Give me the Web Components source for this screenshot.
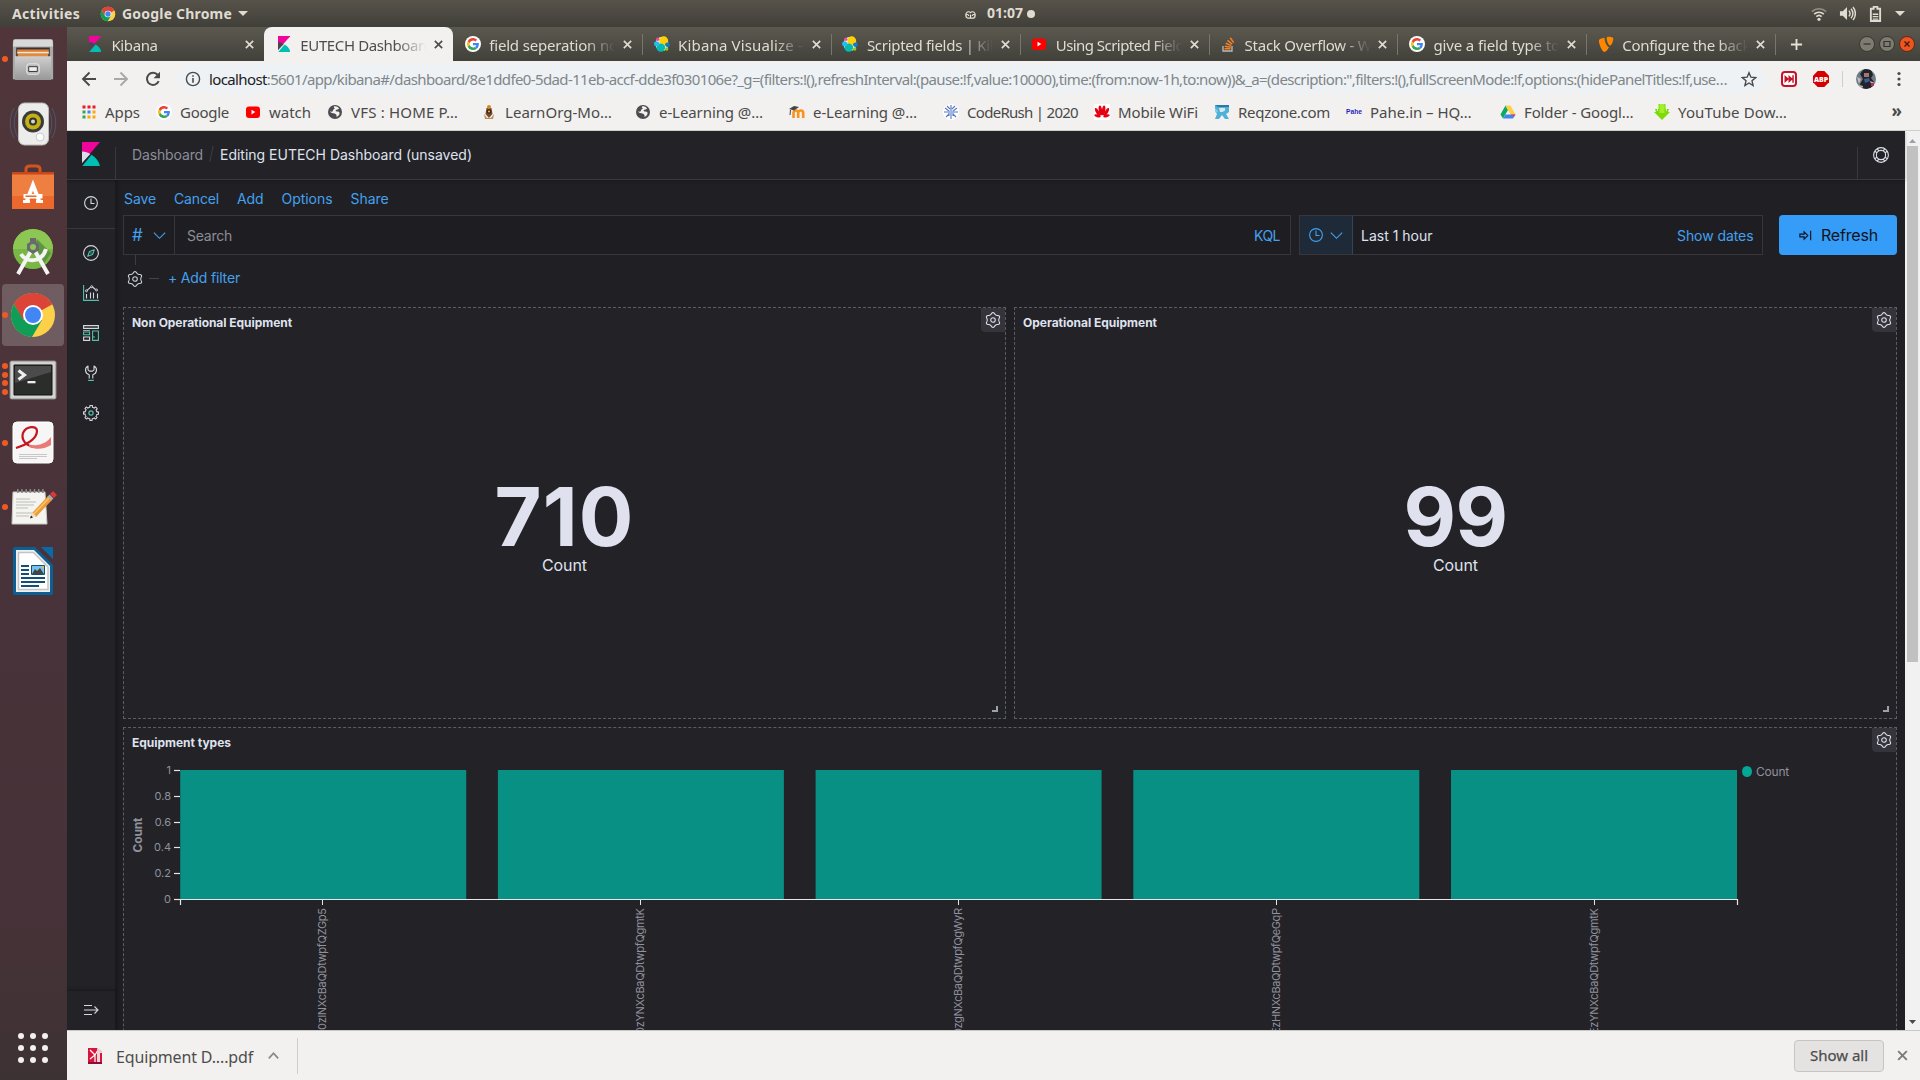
<!DOCTYPE html>
<html lang="en">
<head>
<meta charset="utf-8">
<title>EUTECH Dashboard - Kibana</title>
<style>
html,body{margin:0;padding:0;width:1920px;height:1080px;overflow:hidden;background:#202024}
</style>
</head>
<body>
<desktop-shell></desktop-shell>
<script>
const polar=(n,f)=>{let d='';for(let i=0;i<n;i++){const t=i/n*Math.PI*2,r=f(t);d+=(i?'L':'M')+(8+r*Math.sin(t)).toFixed(2)+' '+(8-r*Math.cos(t)).toFixed(2);}return d+'Z';};
const lobes=polar(96,t=>6.5+.85*Math.cos(6*t)+.12*Math.cos(12*t));
const teeth=polar(128,t=>Math.cos(8*t)>0?7.5:5.9);
const G='<path fill="#ea4335" d="M8 3.6c1.2 0 2.2.4 3 1.2l2.2-2.2A7.5 7.5 0 0 0 1.3 4.7l2.6 2A4.4 4.4 0 0 1 8 3.6z"/><path fill="#fbbc05" d="M3.6 8c0-.5.1-.9.3-1.3l-2.6-2a7.5 7.5 0 0 0 0 6.6l2.6-2A4.300 4.300 0 0 1 3.600 8z"/><path fill="#34a853" d="M8 12.400A4.400 4.400 0 0 1 3.900 9.300l-2.600 2A7.500 7.500 0 0 0 13 13.700l-2.500-2c-.700.500-1.500.700-2.500.700z"/><path fill="#4285f4" d="M15.300 6.600H8v3h4.200c-.200.900-.700 1.600-1.700 2.100l2.500 2c1.600-1.500 2.700-4 2.300-7.100z"/>';
const chromeMark='<circle cx="24" cy="24" r="22" fill="#fdd04a"/><path fill="#db4437" d="M24 24 4.950 13A22 22 0 0 1 43 13.500z"/><path fill="#db4437" d="M5 13A22 22 0 0 1 43.050 13H24L14 29.500z"/><path fill="#0f9d58" d="M4.950 13A22 22 0 0 0 23 46l10-17-9-5-9.500 5z"/><circle cx="24" cy="24" r="10" fill="#fff"/><circle cx="24" cy="24" r="8" fill="#4285f4"/>';
const globe='<circle cx="8" cy="8" r="7" fill="#4c4c50"/><path fill="#f2f1ef" d="M7 2.500c2-.500 4 .500 5 2-1 1.500-3 .500-3.500 2.500 1.500 1 3 0 4 1.500.500 2-1.500 4-3 4.500.500-2-.500-3-2-3.500C6 9 4 9 3 7.500c1 0 2 .500 3-.500-.500-1.500 1-2 2-2.500C7.500 4 6.500 4 7 2.500z"/>';
const elastic='<ellipse cx="9.700" cy="5" rx="4.500" ry="4.700" fill="#fed10a"/><ellipse cx="6.800" cy="11.600" rx="4.400" ry="4.200" fill="#02bcb1"/><ellipse cx="2.700" cy="7.700" rx="2.700" ry="2.500" fill="#24bbef"/><circle cx="3.800" cy="3.200" r="1.700" fill="#f04e98"/><ellipse cx="13.500" cy="8.800" rx="2.500" ry="2.300" fill="#1678c2"/><circle cx="12.700" cy="13" r="1.700" fill="#93c90e"/>';
const yt='<rect x="1" y="2.500" width="14" height="11.500" rx="3" fill="#f00"/><path fill="#fff" d="M6.500 5.800v4.600l3.800-2.300z"/>';
const ICONS={
 chrome:['0 0 48 48',chromeMark],
 google:['0 0 16 16','<circle cx="8" cy="8" r="8" fill="#fff"/><g transform="translate(1.600 1.600) scale(.8)">'+G+'</g>'],
 kibana:['0 0 18 24','<path fill="#f0059a" d="M0 0h18L0 21z"/><path fill="var(--kmid,#dcdce8)" d="M0 9.500c3.200 0 6 1 8.300 2.500L0 21z"/><path fill="#00bfb3" d="M9.500 12.800C14 15.500 17 19.500 18 24H.300z"/>'],
 elastic:['0 0 16 16','<ellipse cx="8" cy="8" rx="6.500" ry="7" fill="#fff"/>'+elastic],
 youtube:['0 0 16 16',yt],
 stack:['0 0 16 16','<path fill="none" stroke="#bcbbbb" stroke-width="1.300" d="M3 10v5h9v-5"/><path stroke="#f48024" stroke-width="1.500" d="M4.500 12.800h6M4.800 10.300l5.900 1M5.700 7.300l5.500 2.300M7.500 4.300l4.600 3.800M10.200 1.800l3.500 4.800"/>'],
 typo3:['0 0 16 16','<path fill="#ff8700" d="M11.300 10.800c-.200 0-.400.100-.600.100-1.700 0-4.200-6-4.200-8 0-.700.200-1 .400-1.200C4.500 2 2 2.700 1.200 3.700 1 4 .900 4.400.900 5c0 3.100 3.300 11 5.600 11 1.100 0 2.900-1.800 4.800-5.200zM10.100.800c2.500 0 5.200.4 5.200 1.800 0 2.900-1.800 7-3 7-1.600 0-3.600-4.500-3.600-6.900 0-1.300.400-1.900 1.400-1.900z"/>'],
 close:['0 0 12 12','<path stroke="currentColor" stroke-width="1.800" d="M2 2l8 8M10 2l-8 8"/>'],
 plus:['0 0 14 14','<path stroke="currentColor" stroke-width="2" d="M7 1v12M1 7h12"/>'],
 back:['0 0 16 16','<path fill="none" stroke="currentColor" stroke-width="1.900" d="M15 8H2M8.500 1.500 2 8l6.500 6.500"/>'],
 fwd:['0 0 16 16','<path fill="none" stroke="currentColor" stroke-width="1.900" d="M1 8h13M7.500 1.500 14 8l-6.500 6.500"/>'],
 reload:['0 0 16 16','<path fill="none" stroke="currentColor" stroke-width="2" d="M13.700 10.200A6.100 6.100 0 1 1 12.800 4"/><path fill="currentColor" d="M15 .700v6.500H8.500z"/>'],
 info:['0 0 16 16','<circle cx="8" cy="8" r="6.600" fill="none" stroke="currentColor" stroke-width="1.400"/><path fill="currentColor" d="M7.200 7h1.600v4.800H7.200zM7.200 4.200h1.600v1.600H7.200z"/>'],
 star:['0 0 16 16','<path fill="none" stroke="currentColor" stroke-width="1.400" d="M8 1.700l1.900 4.500 4.800.400-3.700 3.200 1.100 4.700L8 12l-4.100 2.500L5 9.800 1.300 6.600l4.800-.400z"/>'],
 ext:['0 0 16 16','<rect x="1" y="1" width="14" height="14" rx="3" fill="#fff" stroke="#c5132c" stroke-width="2"/><path fill="#c5132c" d="M3.500 4 8 8l-4.500 4zM7.500 4 12 8l-4.500 4zM11.300 4.300h1.500v7.400h-1.500z"/>'],
 abp:['0 0 16 16','<path fill="#d40000" d="M4.700 0h6.600L16 4.700v6.600L11.300 16H4.700L0 11.300V4.700z"/><text x="8" y="10.600" text-anchor="middle" font-family="Open Sans, sans-serif" font-weight="800" font-size="7" fill="#fff">ABP</text>'],
 avatar:['0 0 20 20','<defs><clipPath id="c"><circle cx="10" cy="10" r="10"/></clipPath></defs><g clip-path="url(#c)"><path fill="#6d7b86" d="M0 0h20v20H0z"/><path fill="#23242b" d="M4 5l4-5h7l2 6-2 3 3 4v8H5l-1-6 3-5z"/><path fill="#a5766a" d="M8 4h5v4H8z"/><path fill="#3a5f96" d="M8 10l5-1 1 3-5 2z"/><path fill="#c9bcc0" d="M1 8l4 2-2 5zM14 12l5 2-3 3zM3 16l4 1-1 3z"/><path fill="#b0305b" d="M15 14h3v3h-3z"/></g>'],
 dots:['0 0 16 16','<g fill="currentColor"><circle cx="8" cy="2.500" r="1.600"/><circle cx="8" cy="8" r="1.600"/><circle cx="8" cy="13.500" r="1.600"/></g>'],
 apps:['0 0 16 16','<path fill="#ea1b22" d="M1.500 1.500h3v3h-3zM6.500 1.500h3v3h-3zM11.500 1.500h3v3h-3z"/><path fill="#34a853" d="M1.500 6.500h3v3h-3zM1.500 11.500h3v3h-3z"/><path fill="#4285f4" d="M6.500 6.500h3v3h-3z"/><path fill="#fbaa05" d="M11.500 6.500h3v3h-3zM6.500 11.500h3v3h-3zM11.500 11.500h3v3h-3z"/>'],
 globe:['0 0 16 16',globe],
 learn:['0 0 16 16','<path fill="#7a4a2a" d="M5.500 4h5l1 6-3.500 4-3.500-4z"/><circle cx="8" cy="3" r="2" fill="#d08a2a"/><circle cx="8" cy="7.500" r="2.300" fill="#3a2222"/><circle cx="8" cy="7.500" r="1.100" fill="#d9b44a"/><path fill="#b98b55" d="M3 10l3 4h4l3-4-1 5H4z"/>'],
 moodle:['0 0 16 16','<path fill="none" stroke="#f7931e" stroke-width="2.600" d="M4.500 14V9c0-3.300 4.700-3.300 4.700 0v5M9.200 9c0-3.300 5-3.300 5 0v5"/><path fill="#444" d="M0 5l5-3 5 1-5 3.500zM1 6l-.500 5h1L2 6z"/>'],
 coderush:['0 0 16 16','<circle cx="8" cy="8" r="8" fill="#fff"/><path fill="none" stroke="#5577c4" stroke-width="1.100" d="M8 1v14M2 4l4 3v5M1 8h4M14 4l-4 3v5M15 8h-4M4 2l3 3M12 2L9 5M3 13l3-3M13 13l-3-3"/>'],
 huawei:['0 0 16 16','<path fill="#fff" d="M0 0h16v16H0z"/><g fill="#e60012"><ellipse cx="6.500" cy="6.500" rx="1.700" ry="5" transform="rotate(-8 6.500 7)"/><ellipse cx="9.500" cy="6.500" rx="1.700" ry="5" transform="rotate(8 9.500 7)"/><ellipse cx="3.500" cy="8" rx="1.600" ry="4.500" transform="rotate(-28 3.500 8)"/><ellipse cx="12.500" cy="8" rx="1.600" ry="4.500" transform="rotate(28 12.500 8)"/><ellipse cx="3.500" cy="11.800" rx="3.300" ry="1.400" transform="rotate(12 3.500 11.800)"/><ellipse cx="12.500" cy="11.800" rx="3.300" ry="1.400" transform="rotate(-12 12.500 11.800)"/></g>'],
 reqzone:['0 0 16 16','<path fill="#4fb0d8" d="M1 1h14v7l-3 2 3 5h-4l-3-4-3 4H1l2-5-2-3z"/><path fill="#d6e8f0" d="M5 4h6v2.500L8.500 8H6z"/><path fill="#2e7aa5" d="M1 1h14v2H4z"/><path fill="#8ccbe6" d="M1 4l3 3-2 2-1-2z"/>'],
 pahe:['0 0 16 16','<text x="0" y="10" textLength="16" lengthAdjust="spacingAndGlyphs" font-family="Liberation Sans, sans-serif" font-weight="700" font-size="8" fill="#2a1fc0">Pahe</text>'],
 drive:['0 0 16 16','<path fill="#0da960" d="M5.500 1.500 .500 10.500l2.500 4L8 6z"/><path fill="#ffcf48" d="M5.500 1.500h5l5 9h-5z"/><path fill="#4285f4" d="M3 14.500l2.600-4h9.900l-2.500 4z"/><path fill="#ea4335" d="M10.500 10.500h5l-1.300 2z"/>'],
 ytd:['0 0 16 16','<path fill="#7ddb08" d="M4.500 0h7v5H15l-1 3h2l-8 8-8-8h2L1 5h3.500z"/><path stroke="#f2f1ef" stroke-width=".8" d="M3.500 1v6M12.500 1v6"/><path fill="#a4ef2b" d="M5.500 0h5v9h-5z"/>'],
 cog:['0 0 16 16','<path fill="none" stroke="currentColor" stroke-width="1.050" d="'+lobes+'"/><circle cx="8" cy="8" r="2.300" fill="none" stroke="currentColor" stroke-width="1.050"/>'],
 mgmt:['0 0 16 16','<path fill="none" stroke="currentColor" stroke-width="1.100" stroke-linejoin="round" d="'+teeth+'"/><circle cx="8" cy="8" r="2.100" fill="none" stroke="#4fc3ad" stroke-width="1.200"/>'],
 clock:['0 0 16 16','<circle cx="8" cy="8" r="6.400" fill="none" stroke="currentColor" stroke-width="1.100"/><path fill="none" stroke="currentColor" stroke-width="1.100" d="M8 3.500v5h3.500"/>'],
 compass:['0 0 16 16','<circle cx="8" cy="8" r="7.400" fill="none" stroke="currentColor" stroke-width="1.100"/><path fill="none" stroke="#4fc3ad" stroke-width="1.100" stroke-linejoin="round" d="M11.300 4.700 9.500 9.500 4.700 11.300 6.500 6.500z"/><circle cx="8" cy="8" r=".700" fill="#4fc3ad"/>'],
 viz:['0 0 16 16','<path fill="none" stroke="#4fc3ad" stroke-width="1.100" d="M.600 0v15.400H16"/><path fill="none" stroke="currentColor" stroke-width="1.100" d="M3.500 9v4.500M7.500 7.500v6M10.500 7.500v6M14.500 8.500v5M4.200 5.200l3.600-3M9.500 2l3 2.500"/><g fill="none" stroke="currentColor"><circle cx="3.500" cy="5.800" r="1"/><circle cx="8.700" cy="1.700" r="1"/><circle cx="13.500" cy="5" r="1"/></g>'],
 dash:['0 0 16 16','<path fill="none" stroke="currentColor" stroke-width="1.100" d="M.600.600h14.800v2.800H.600zM.600 12h6v3.400h-6z"/><path stroke="currentColor" opacity=".7" d="M0 5.500h7"/><path fill="none" stroke="#4fc3ad" stroke-width="1.100" d="M.600 7h6v2.800h-6zM9.600 6h5.800v9.400H9.600zM9.600 12H12"/>'],
 wrench:['0 0 16 16','<path fill="none" stroke="currentColor" stroke-width="1.100" stroke-linejoin="round" d="M6.200 13.500V9.700C1.800 8.500 1.200 3 5 1v3.800l1.500 1.300h3L11 4.800V1c3.800 2 3.200 7.500-1.200 8.700v3.800"/><path stroke="#4fc3ad" stroke-width="1.200" d="M5.200 15.400h5.600"/>'],
 collapse:['0 0 16 16','<path fill="none" stroke="currentColor" stroke-width="1.100" d="M1 3.500h8M1 8h13M1 12.500h8M11.500 4.500 15 8l-3.500 3.500"/>'],
 help:['0 0 16 16','<g fill="none" stroke="currentColor" stroke-width="1.100"><circle cx="8" cy="8" r="7.400"/><circle cx="8" cy="8" r="4.600"/><path d="M4.300 1.600l1.500 2.500M11.700 1.600l-1.500 2.500M4.300 14.400l1.500-2.500M11.700 14.400l-1.500-2.500M1.600 4.300l2.500 1.500M1.600 11.700l2.500-1.500M14.400 4.300l-2.500 1.500M14.400 11.700l-2.500-1.500"/></g>'],
 down:['0 0 16 16','<path fill="none" stroke="currentColor" stroke-width="1.200" d="M2 5l6 6 6-6"/>'],
 up:['0 0 16 16','<path fill="none" stroke="currentColor" stroke-width="1.800" d="M3 11l5-5.500 5 5.500"/>'],
 kquery:['0 0 16 16','<path fill="none" stroke="currentColor" stroke-width="1.200" d="M2 6.500h4.500V4L10.500 8l-4 4V9.500H2zM13.500 3v10"/>'],
 wifi:['0 0 18 18','<g fill="none" stroke="#dfdbd2" stroke-width="1.800"><path opacity=".45" d="M1 6.300c4.500-4.200 11.500-4.200 16 0"/><path d="M3.600 9.200c3-2.800 7.800-2.800 10.800 0M6 12c1.700-1.600 4.300-1.600 6 0"/></g><circle cx="9" cy="15" r="1.800" fill="#dfdbd2"/>'],
 volume:['0 0 18 18','<path fill="#dfdbd2" d="M1 6.500h3L8.500 2v14L4 11.500H1z"/><path fill="none" stroke="#dfdbd2" stroke-width="1.500" d="M10.500 6c1.500 1.800 1.500 4.200 0 6M12.700 4c2.500 3 2.500 7 0 10M14.800 2.200c3.400 4 3.400 9.600 0 13.600"/>'],
 battery:['0 0 14 18','<path fill="none" stroke="#dfdbd2" stroke-width="2" d="M2 4h3V2h4v2h3v13H2z"/><path fill="#dfdbd2" d="M4 9h6v1.500H4zM4 11.600h6v1.500H4zM4 14.200h6v1.300H4z"/>'],
 tri:['0 0 10 6','<path fill="currentColor" d="M0 0h10L5 6z"/>'],
 triup:['0 0 10 6','<path fill="currentColor" d="M0 6h10L5 0z"/>'],
 layout:['0 0 12 12','<g fill="none" stroke="#e6e2d9" stroke-width="1.300"><path d="M4 7.500a1.500 1.500 0 1 0-1.500 1.500M2.500 9.500C.5 9.500.3 5 2 3.700c1-1 2.800-.9 4 .3 1.200-1.200 3-1.300 4-.3 1.700 1.300 1.500 5.800-.5 6.300M2.500 10h7M6 6v3.500M8 7.500a1.500 1.500 0 1 1 1.500 1.500"/></g>'],
 pdf:['0 0 16 16','<path fill="#d6143c" d="M1 0h9l5 4v12H1z"/><path fill="#8d0c3a" d="M1 14h14v2H1z"/><path fill="none" stroke="#fff" stroke-width="1.200" d="M3 2l5 5-5 4M8 7v7M8 7l3-5"/><path fill="#e9d4d6" d="M10 0l5 4v1h-2v9h-3z"/>'],
 wmin:['0 0 16 16','<circle cx="8" cy="8" r="7.500" fill="#7d7b72" stroke="#383730"/><path stroke="#33322d" stroke-width="1.200" d="M4.500 8h7"/>'],
 wmax:['0 0 16 16','<circle cx="8" cy="8" r="7.500" fill="#7d7b72" stroke="#383730"/><path fill="none" stroke="#33322d" stroke-width="1.200" d="M5 5.500h6v5H5z"/>'],
 wclose:['0 0 16 16','<circle cx="8" cy="8" r="7.500" fill="#ee5420" stroke="#5a2a18"/><path stroke="#461c0c" stroke-width="1.400" d="M5.500 5.500l5 5M10.500 5.500l-5 5"/>'],
 files:['0 0 48 48','<defs><linearGradient id="g" x2="0" y2="1"><stop stop-color="#cfcfcf"/><stop offset="1" stop-color="#989898"/></linearGradient></defs><path fill="#a9a9a9" d="M3 6c0-2 1-3 3-3h36c2 0 3 1 3 3v39H3z"/><path fill="#d8d8d8" d="M4 4h40l1 7H3z"/><path fill="#333" d="M6.500 12h35v10h-35z"/><path fill="#e07b32" d="M7.500 14h33v3h-33z"/><path fill="#fbe5c8" d="M7.500 16.500h33v2h-33z"/><path fill="#e48b3b" d="M8 18.500h32V22H8z"/><path fill="url(#g)" d="M5 21h38v25H5z"/><rect x="17.500" y="29" width="13" height="11" rx="2.500" fill="#bbb" stroke="#e8e8e8"/><path fill="#eee" stroke="#333" d="M19.500 32h9v5h-9z"/>'],
 speaker:['0 0 48 48','<g fill="none" stroke="#4c6482" opacity=".7"><path d="M9 10c-5 8-5 20 0 28M5 9c-5 9-5 21 0 30M39 10c5 8 5 20 0 28M43 9c5 9 5 21 0 30"/></g><rect x="9.500" y="4" width="30" height="42" rx="6" fill="#ececea" stroke="#bbb"/><circle cx="24" cy="22.500" r="11" fill="#3b3b3b"/><circle cx="24" cy="22.500" r="8" fill="#c5b014"/><circle cx="24" cy="22.500" r="4" fill="#333"/><circle cx="24" cy="22.500" r="2" fill="#d8d8c8"/><circle cx="31" cy="38" r="4" fill="#fafafa" stroke="#ccc"/>'],
 software:['0 0 48 48','<path fill="none" stroke="#d1531f" stroke-width="3" d="M17 14V6c0-2 2-3 4-3h6c2 0 4 1 4 3v8"/><path fill="#c9481b" d="M3 9h42v6H3z"/><path fill="#ef7f40" d="M3 11.500h42V46H3z"/><path fill="#ea6427" opacity=".8" d="M3 33h42v13H3z"/><path fill="none" stroke="#fff" stroke-width="4" d="M17.500 39l6.500-17 6.500 17"/><path fill="#fff" d="M14.500 31h19v4.500h-19z"/><path fill="#e86a2b" d="M16.500 32.500h11v1.500h-11z"/><path fill="#fff" d="M14 37h7v3h-7zM27 37h7v3h-7z"/>'],
 studio:['0 0 48 48','<circle cx="24" cy="22" r="20" fill="#78b743"/><path fill="#8cc653" d="M4 22a20 20 0 0 1 40 0z"/><path fill="#5f9440" d="M28 12l14 14-8 12-10-14z"/><path fill="none" stroke="#f4f4f4" stroke-width="4" d="M22 24 9 47M26 24l13 23M12 27c5 9 21 9 25-5"/><path fill="#6a6a6e" d="M21 11h6v4l3 2v6l-6 4-6-4v-6l3-2z"/><circle cx="24" cy="20" r="3" fill="#8fc55a"/>'],
 terminal:['0 0 48 48','<rect x="1" y="6" width="46" height="38" rx="1.500" fill="#d2d2d0" stroke="#888"/><path fill="#2b2d2b" stroke="#111" d="M5 10h38v30H5z"/><path fill="#4a4b4a" d="M6 11h36v6L6 28z"/><path fill="none" stroke="#eee" stroke-width="3" d="M9.500 15.500l6 4.500-6 4.500"/><path fill="#eee" d="M18.500 26h8v2.300h-8z"/>'],
 acro:['0 0 48 48','<rect x="4" y="3" width="40" height="41" rx="4" fill="#f6f6f6" stroke="#fff"/><path fill="none" stroke="#c8141c" stroke-width="2.200" d="M7 29c10-3 21-9 21-17 0-6-11-5-14 2-2 6 2 13 12 14"/><path fill="#ea7a78" d="M20 26c9 1 17-1 22-8v8c-6 4-14 5-22 2z"/><path stroke="#c8c8c8" d="M10 35.500h28M10 37.500h28M10 39.500h18"/>'],
 gedit:['0 0 48 48','<path fill="#f4f4f0" stroke="#c8c8c2" d="M4 9h32l2 32H3z"/><path stroke="#555" stroke-width="1.500" stroke-dasharray="2 2" d="M8 8h27" /><path stroke="#888" stroke-width="4" stroke-dasharray="1.500 2.700" d="M8 8h28"/><g stroke="#bcbcb8"><path d="M7 16h14M7 19h20M7 22h18M7 25h12M7 30h22M7 33h13"/></g><path stroke="#eb9a35" stroke-width="5.500" d="M25 32 41 15"/><path stroke="#f8c264" stroke-width="1.800" d="M25 31 40 15"/><path fill="#f0dcb8" d="M21 35l2-6 4 4z"/><path fill="#222" d="M21 35.500l1-3 2 2z"/><path stroke="#aaa" stroke-width="5.500" d="M40.500 15.500l2-2"/><path stroke="#dd3838" stroke-width="5.500" d="M43 13l3-3"/>'],
 writer:['0 0 48 48','<path fill="#0c5f94" d="M6 0h20l18 18v28a2 2 0 0 1-2 2H6a2 2 0 0 1-2-2V2a2 2 0 0 1 2-2z"/><path fill="#0a6aa6" d="M32 0h11a1 1 0 0 1 1 1v11z"/><path fill="#f0f0f0" d="M7 3h18l16 16v26H7z"/><path fill="#fff" stroke="#c4c4c4" stroke-width="1.500" d="M9.500 5.500h15L39 20v22.500H9.500z"/><path stroke="#134f78" stroke-width="2" d="M12 19h8M12 23h8M12 27h8M12 31h24M12 35h24M12 39h18"/><path fill="#77c2ea" stroke="#134f78" d="M22.500 18.500h13v9h-13z"/><path fill="#444" d="M23 27l3-5 2 2 3-3 4 6z"/><path fill="#e3c234" d="M32 19h3v3z"/>']
};
const comp=(name,css,html,init)=>customElements.define(name,class extends HTMLElement{
  constructor(){super();const t=document.createElement('template');t.innerHTML=`<style>*{box-sizing:border-box}:host{box-sizing:border-box}${css}</style>`+(typeof html==='function'?html(this):html);
    this.attachShadow({mode:'open'}).appendChild(t.content.cloneNode(true));if(init)init(this);}
});
const tabs=[['kibana','Kibana',46],['kibana','EUTECH Dashboard',132,1],['google','field seperation not',134],['elastic','Kibana Visualize - Fi',141],['elastic','Scripted fields | Kiba',140],['youtube','Using Scripted Fields',135],['stack','Stack Overflow - Wh',136],['google','give a field type to i',134],['typo3','Configure the backe',136]];
const marks=[['apps','Apps',35,35],['google','Google',49,49],['youtube','watch',42,42],['globe','VFS : HOME P…',107,114],['learn','LearnOrg-Mo…',107,114],['globe','e-Learning @…',104,114],['moodle','e-Learning @…',104,114],['coderush','CodeRush | 2020',111,111],['huawei','Mobile WiFi',80,80],['reqzone','Reqzone.com',92,92],['pahe','Pahe.in – HQ…',101.500,114],['drive','Folder - Googl…',109.500,114],['ytd','YouTube Dow…',109,114]];

comp('ui-icon',':host{display:block;flex:none;line-height:0}svg{display:block;width:100%;height:100%}',el=>{
  const [vb,body]=ICONS[el.getAttribute('name')];const s=(el.getAttribute('size')||'16').split(' ');
  return `<style>:host{width:${s[0]}px;height:${s[1]||s[0]}px}</style><svg viewBox="${vb}" preserveAspectRatio="none">${body}</svg>`;});

comp('top-bar',`:host{display:grid;grid-template-columns:964px 80px 1fr;align-items:center;height:27px;flex:none;background:linear-gradient(#57534a,#403f39);color:#dfdbd2;font:700 14px "Noto Sans","Open Sans",sans-serif}
 .l,.c,.r{display:flex;align-items:center}.l{padding-left:12px}.c{gap:11px;padding:0 0 2px 1px}.r{justify-content:flex-end;padding-right:15px;gap:11px}.dot{width:8px;height:8px;border-radius:50%;background:#dfdbd2;margin:2px 0 0 -7px}`,
 `<div class="l"><fit-text w="68">Activities</fit-text><ui-icon name="chrome" size="16" style="margin:0 6px 0 20px"></ui-icon><fit-text w="110">Google Chrome</fit-text><ui-icon name="tri" size="10 5" style="margin-left:6px"></ui-icon></div>
 <div class="c"><ui-icon name="layout" size="11 11" style="margin-top:3px"></ui-icon><fit-text w="36">01:07</fit-text><span class="dot"></span></div>
 <div class="r"><ui-icon name="wifi" size="16"></ui-icon><ui-icon name="volume" size="17" style="margin-left:1px"></ui-icon><ui-icon name="battery" size="13 17" style="margin:0 2px"></ui-icon><ui-icon name="tri" size="10 5"></ui-icon></div>`);

comp('dock-item',`:host{display:flex;position:relative;height:64px;width:67px;align-items:center;justify-content:center;padding-right:1px}
 :host([active])::before{content:"";position:absolute;left:2px;top:1px;width:62px;height:62px;border-radius:4px;background:rgba(255,255,255,.2)}
 ui-icon{position:relative}.d{position:absolute;left:2px;top:0;bottom:0;display:flex;flex-direction:column;justify-content:center;gap:2.500px}.d i{width:6px;height:6px;border-radius:50%;background:#ee5a24}`,
 el=>`<div class="d">${'<i></i>'.repeat(+el.getAttribute('dots')||0)}</div><ui-icon name="${el.getAttribute('icon')}" size="${el.getAttribute('size')||48}"></ui-icon>`);

comp('app-dock',`:host{display:flex;flex-direction:column;width:67px;flex:none;background:linear-gradient(#50363a,#49333a 50%,#463238 85%,#3d3233)}
 .g{margin:auto 0 17px 18px;display:grid;grid-template-columns:repeat(3,6px);gap:6px}.g i{width:6px;height:6px;border-radius:50%;background:#f3f0ee}`,
 `<dock-item icon="files" dots="1" size="46"></dock-item><dock-item icon="speaker"></dock-item><dock-item icon="software" size="48"></dock-item><dock-item icon="studio" size="48"></dock-item><dock-item icon="chrome" active dots="1" size="48"></dock-item><dock-item icon="terminal" dots="4" size="48"></dock-item><dock-item icon="acro" dots="1" size="48"></dock-item><dock-item icon="gedit" dots="1" size="48"></dock-item><dock-item icon="writer" size="48"></dock-item><div class="g">${'<i></i>'.repeat(9)}</div>`);

comp('browser-tab',`:host{display:flex;flex:none;align-items:center;width:188.850px;height:34px;padding:0 9px 0 12px;color:#dfdcd3;position:relative}
 :host([sep])::after{content:"";position:absolute;right:-1px;top:7px;width:1px;height:21px;background:#77766d}
 .t{width:129px;overflow:hidden;white-space:nowrap;margin-left:8px;-webkit-mask-image:linear-gradient(90deg,#000 96px,transparent 126px);mask-image:linear-gradient(90deg,#000 96px,transparent 126px)}
 .c{margin-left:auto}.i{width:16px;display:flex;justify-content:center;padding-right:1px}
 :host([active]){background:#f2f1ef;border-radius:8px 8px 0 0;color:#4d4d4d}
 :host{--kmid:#4a4550}`,
 el=>`<span class="i"><ui-icon name="${el.getAttribute('icon')}" size="${el.getAttribute('icon')==='kibana'?'12.500 16':'16'}"></ui-icon></span><span class="t"><slot></slot></span><ui-icon class="c" name="close" size="11"></ui-icon>`);

comp('tab-strip',`:host{display:flex;flex:none;height:34px;background:linear-gradient(#5b594f,#41403a);font:15px "Noto Sans","Open Sans",sans-serif;padding-left:8.500px;align-items:center;color:#e6e3da}
 .w{margin-left:auto;display:flex;gap:4px;padding-right:5px}.p{margin-left:15px}`,
 tabs.map((t,i)=>`<browser-tab icon="${t[0]}" ${t[3]?'active':''} ${i>1?'sep':''}><fit-text w="${t[2]}">${t[1]}</fit-text></browser-tab>`).join('')+
 `<ui-icon class="p" name="plus" size="13"></ui-icon><div class="w"><ui-icon name="wmin"></ui-icon><ui-icon name="wmax"></ui-icon><ui-icon name="wclose"></ui-icon></div>`);

comp('address-bar',`:host{display:flex;flex:none;align-items:center;height:36px;padding:0 13px 0 14px;background:#f2f1ef;color:#4a4a4a;font:15px "Noto Sans","Open Sans",sans-serif}
 .n{display:flex;gap:16px;width:96px}.f{color:#a9a8a6}.pill{display:flex;align-items:center;width:1589px;height:30px;border-radius:15px;background:#eef2f4;padding:0 9px 0 8px}
 .u{margin:-1px 0 0 8px;color:#80868a;white-space:nowrap}.u b{font-weight:400;color:#202124}.s{margin-left:auto}
 .x{display:flex;align-items:center;margin-left:auto}`,
 `<div class="n"><ui-icon name="back"></ui-icon><ui-icon class="f" name="fwd"></ui-icon><ui-icon name="reload"></ui-icon></div>
 <div class="pill"><ui-icon name="info"></ui-icon><fit-text class="u" w="1518"><b>localhost</b>:5601/app/kibana#/dashboard/8e1ddfe0-5dad-11eb-accf-dde3f030106e?_g=(filters:!(),refreshInterval:(pause:!f,value:10000),time:(from:now-1h,to:now))&amp;_a=(description:'',filters:!(),fullScreenMode:!f,options:(hidePanelTitles:!f,use…</fit-text><ui-icon class="s" name="star"></ui-icon></div>
 <div class="x"><ui-icon name="ext"></ui-icon><ui-icon name="abp" style="margin-left:16px"></ui-icon><i style="width:1px;height:16px;background:#cfcecb;margin:0 13px 0 13px"></i><ui-icon name="avatar" size="20"></ui-icon><ui-icon name="dots" size="16" style="margin-left:15px"></ui-icon></div>`);

comp('bookmark-item',':host{display:flex;align-items:center;gap:8px}span{display:block;white-space:nowrap;margin-top:-1px}',
 el=>`<ui-icon name="${el.getAttribute('icon')}"></ui-icon><span style="width:${el.getAttribute('box')}px"><slot></slot></span>`);
comp('bookmark-bar',`:host{display:flex;flex:none;align-items:center;gap:16px;height:34px;padding:0 18px 3.500px 14px;background:#f2f1ef;border-bottom:1px solid #cfceca;color:#4a4a4a;font:15px "Noto Sans","Open Sans",sans-serif}.m{margin:-3px 0 0 auto;font-weight:700;font-size:17px}`,
 marks.map(m=>`<bookmark-item icon="${m[0]}" box="${m[3]}"><fit-text w="${m[2]}">${m[1]}</fit-text></bookmark-item>`).join('')+'<span class="m">»</span>');

comp('kbn-header',`:host{display:flex;flex:none;height:49px;background:#232227;border-bottom:1px solid #38383f;font:14px Inter,sans-serif;position:relative;z-index:1;box-shadow:0 1px 3px rgba(0,0,0,.25)}
 .logo{width:48px;padding:11px 0 0 15px}.bc{display:flex;align-items:center;border-left:1px solid #38383f;margin-top:16px;height:32px;padding:0 0 18px 16px;color:#8b8d98;flex:1}.bc b{font-weight:400;color:#dfe2ee}.bc i{width:1px;height:16px;background:#3d3d44;transform:rotate(12deg);margin:0 8px}
 .h{border-left:1px solid #38383f;margin-top:16px;width:48px;color:#dcdfea}.h ui-icon{margin:0 0 0 15px}`,
 `<div class="logo"><ui-icon name="kibana" size="18 24"></ui-icon></div><div class="bc"><fit-text w="71">Dashboard</fit-text><i></i><b><fit-text w="252">Editing EUTECH Dashboard (unsaved)</fit-text></b></div><div class="h"><ui-icon name="help"></ui-icon></div>`);

comp('side-nav',`:host{display:flex;flex-direction:column;width:49px;flex:none;background:#232227;border-right:1px solid #1a1a1e;box-shadow:1px 0 4px rgba(0,0,0,.3);color:#d4d7e2;position:relative}
 .r{height:49px;border-bottom:1px solid #38383f;padding:15px 0 0 16px}.l{padding:16px 0 0 16px;display:flex;flex-direction:column;gap:24px}.e{margin-top:auto;height:40px;border-top:1px solid #1b1b1f;box-shadow:0 -1px 3px rgba(0,0,0,.2);padding:11px 0 0 16px}`,
 `<div class="r"><ui-icon name="clock"></ui-icon></div><div class="l"><ui-icon name="compass"></ui-icon><ui-icon name="viz"></ui-icon><ui-icon name="dash"></ui-icon><ui-icon name="wrench"></ui-icon><ui-icon name="mgmt"></ui-icon></div><div class="e"><ui-icon name="collapse"></ui-icon></div>`);

comp('kbn-menu',`:host{display:flex;flex:none;gap:18px;height:35px;padding:2px 0 0 1px;align-items:center;color:#44a1ef;font:14px Inter,sans-serif}`,
 [['Save',32],['Cancel',45],['Add',26.500],['Options',51],['Share',38]].map(m=>`<fit-text w="${m[1]}">${m[0]}</fit-text>`).join(''));

comp('query-bar',`:host{display:flex;flex:none;height:40px;color:#44a1ef;font:14px Inter,sans-serif}
 div{display:flex;align-items:center}.q,.d{border:1px solid #36363c;background:#1e1e22;height:40px}.q{width:1168px}.h{width:51px;height:38px;border-right:1px solid #36363c;padding-left:8px;gap:10px;font-size:17px}.s{color:#8b8d98;padding-left:12px;flex:1}.k{padding-right:10px}
 .d{margin-left:8px;width:464px}.c{width:53px;height:38px;background:#1e2a38;border-right:1px solid #31465b;padding-left:7.500px;gap:5px}.t{padding-left:8px;color:#dfe2ee;flex:1}.z{padding-right:8.500px}
 .b{margin-left:16px;width:118px;height:40px;border-radius:4px;background:#359cf8;color:#111318;font-size:16px;padding-left:19px;gap:8px}`,
 `<div class="q"><div class="h"><fit-text w="10">#</fit-text><ui-icon name="down" size="15 15"></ui-icon></div><div class="s"><fit-text w="45">Search</fit-text></div><div class="k"><fit-text w="26">KQL</fit-text></div></div>
 <div class="d"><div class="c"><ui-icon name="clock"></ui-icon><ui-icon name="down" size="15 15"></ui-icon></div><div class="t"><fit-text w="71.500">Last 1 hour</fit-text></div><div class="z"><fit-text w="76.500">Show dates</fit-text></div></div>
 <div class="b"><ui-icon name="kquery" size="15"></ui-icon><fit-text w="57">Refresh</fit-text></div>`);

comp('filter-bar',`:host{display:flex;flex:none;align-items:center;height:52px;padding:0 0 7px 4px;color:#44a1ef;font:14px Inter,sans-serif;position:relative}
 :host::before{content:"";position:absolute;left:12px;top:0;width:1px;height:10px;background:#3d3d44}.g{color:#cfd2dd;margin-top:3px}.l{width:10px;height:1px;background:#44444c;margin:1px 9px 0 6px}`,
 `<ui-icon class="g" name="cog"></ui-icon><i class="l"></i><fit-text w="72">+ Add filter</fit-text>`);

comp('dash-panel',`:host{display:flex;flex-direction:column;position:relative;background:#232227;border:1px dashed #5c5c65;font:12px Inter,sans-serif;color:#dfe2ee}
 .t{height:24px;display:flex;align-items:center;padding:5px 0 0 8px;font-weight:700}.g{position:absolute;right:0;top:0;width:24px;height:24px;background:#35343a;border-radius:0 0 0 4px;padding:4px;color:#dfe2ee}
 .z{position:absolute;right:7px;bottom:6px;width:6px;height:6px;border:solid #9aa0b0;border-width:0 2px 2px 0}.b{flex:1;display:flex;flex-direction:column;min-height:0}`,
 el=>`<div class="t"><fit-text w="${el.getAttribute('tw')}">${el.getAttribute('heading')}</fit-text></div><div class="b"><slot></slot></div><div class="g"><ui-icon name="cog"></ui-icon></div>${el.hasAttribute('resize')?'<i class="z"></i>':''}`);

comp('metric-value',`:host{display:flex;flex-direction:column;align-items:center;flex:1;padding-top:138px;color:#dfe2ee;font:16px/20px Inter,sans-serif}.v{font-size:81px;font-weight:700;line-height:80px}.c{margin-top:-4px}`,
 el=>`<div class="v"><fit-text w="${el.getAttribute('vw')}">${el.getAttribute('value')}</fit-text></div><div class="c"><fit-text w="45">Count</fit-text></div>`);

const W0=180.500,STEP=317.700;
const labels=[['0zlNXcBaQDtwpfQZGp5',122],['0zYNXcBaQDtwpfQgmtK',126],['0zgNXcBaQDtwpfQgWyR',127],['EzHNXcBaQDtwpfQeGqP',126],['EzYNXcBaQDtwpfQgmtK',126]];
comp('bar-chart',`:host{display:flex;flex:1;font:12px Inter,sans-serif;color:#8f919c}svg{display:block;flex:none}.lg{display:flex;align-items:center;gap:4px;height:15px;margin:12px 0 0 0}.lg i{width:10px;height:11px;border-radius:50%;background:#03a798}`,
 ()=>{let s='';
  for(let i=0;i<5;i++)s+=`<rect x="${W0-.3+i*STEP}" y="770" width="286" height="129" fill="#089084"/>`;
  s+='<path fill="none" stroke="#e6e6ea" stroke-width="1.200" d="M174 899.500H1737.500M180.500 899V905M1737.500 899V905"/>';
  for(let i=0;i<5;i++){const x=Math.round(322+i*317.900);s+=`<path stroke="#e6e6ea" d="M${x+.5} 899v6"/><text transform="translate(${x+4} 908) rotate(-90)" text-anchor="end" textLength="${labels[i][1]}" font-size="11">${labels[i][0]}</text>`;}
  ['1','0.8','0.6','0.4','0.2','0'].forEach((v,i)=>{const y=Math.round(770+i*25.800)+.5;s+=`<path stroke="#e6e6ea" stroke-width="1.200" d="M174 ${y}h6"/><text x="171" y="${y+3}" text-anchor="end" font-size="11">${v}</text>`;});
  s+='<text transform="translate(142 835) rotate(-90)" text-anchor="middle" font-weight="700" textLength="35" font-size="12">Count</text>';
  return `<svg width="1618" height="280" viewBox="124 752 1618 280" fill="currentColor">${s}</svg><div class="lg"><i></i><fit-text w="33">Count</fit-text></div>`;});

comp('scroll-bar',`:host{display:flex;flex-direction:column;align-items:center;width:15px;background:#f1f1f1;padding:8px 0 6px;flex:none}.th{width:11px;height:516px;background:#c1c1c1;margin-top:3px}.dn{margin-top:auto;color:#4a4a4a}.u{color:#a0a0a0}`,
 `<ui-icon class="u" name="triup" size="7 4"></ui-icon><div class="th"></div><ui-icon class="dn" name="tri" size="7 4"></ui-icon>`);

comp('kibana-app',`:host{display:flex;flex:1;min-height:0;background:#202024;overflow:hidden}.a{flex:1;display:flex;flex-direction:column;min-width:0}.m{display:flex;flex:1;min-height:0}.c{flex:1;padding:0 8px 0 7px;display:flex;flex-direction:column;min-width:0;overflow:hidden}.row{display:flex;flex:none;gap:8px;margin-bottom:8px}.row dash-panel{flex:1;height:412px}.wide{height:400px;flex:none}`,
 `<div class="a"><kbn-header></kbn-header><div class="m"><side-nav></side-nav><div class="c"><kbn-menu></kbn-menu><query-bar></query-bar><filter-bar></filter-bar>
 <div class="row"><dash-panel heading="Non Operational Equipment" tw="160" resize><metric-value value="710" vw="140"></metric-value></dash-panel><dash-panel heading="Operational Equipment" tw="134" resize><metric-value value="99" vw="104"></metric-value></dash-panel></div>
 <dash-panel class="wide" heading="Equipment types" tw="99"><bar-chart></bar-chart></dash-panel></div></div></div><scroll-bar></scroll-bar>`);

comp('download-shelf',`:host{display:flex;flex:none;height:50px;align-items:center;background:#f2f1ef;border-top:1px solid #c9c8c5;color:#4d4d4d;font:16px "Noto Sans","Open Sans",sans-serif;padding:0 11px 0 20px}
 .s{width:1px;height:36px;background:#cfcecb;margin-left:16px}.b{margin-left:auto;width:90px;height:32px;border:1px solid #c6c5c2;border-radius:4px;background:#e4e3e1;display:flex;align-items:center;justify-content:center;font-size:15px;-webkit-text-stroke:.25px;padding-bottom:2px}.x{margin-left:12px;color:#7b7b7b}`,
 `<ui-icon name="pdf"></ui-icon><fit-text w="137" style="margin:2px 0 0 13px">Equipment D....pdf</fit-text><ui-icon name="up" size="15" style="margin-left:13px;color:#888"></ui-icon><i class="s"></i><div class="b"><fit-text w="58">Show all</fit-text></div><ui-icon class="x" name="close" size="13"></ui-icon>`);

comp('browser-window',':host{display:flex;flex-direction:column;flex:1;min-width:0}',
 '<tab-strip></tab-strip><address-bar></address-bar><bookmark-bar></bookmark-bar><kibana-app></kibana-app><download-shelf></download-shelf>');
comp('desktop-shell',':host{display:flex;flex-direction:column;width:1920px;height:1080px;overflow:hidden}.r{display:flex;flex:1;min-height:0}',
 '<top-bar></top-bar><div class="r"><app-dock></app-dock><browser-window></browser-window></div>');

/* Spreads its text over the width given in the w attribute. */
customElements.define('fit-text',class extends HTMLElement{
  connectedCallback(){
    if(!this.shadowRoot){this.attachShadow({mode:'open'}).innerHTML='<style>:host{display:inline-block;white-space:nowrap;vertical-align:middle}span{display:inline-block}</style><span><slot></slot></span>';}
    const s=this.shadowRoot.querySelector('span'),w=+this.getAttribute('w'),n=this.textContent.length;
    s.style.letterSpacing='0';const nat=s.getBoundingClientRect().width;
    s.style.letterSpacing=((w-nat)/n).toFixed(3)+'px';
    this.style.width=w+'px';
  }
});
</script>
</body>
</html>
